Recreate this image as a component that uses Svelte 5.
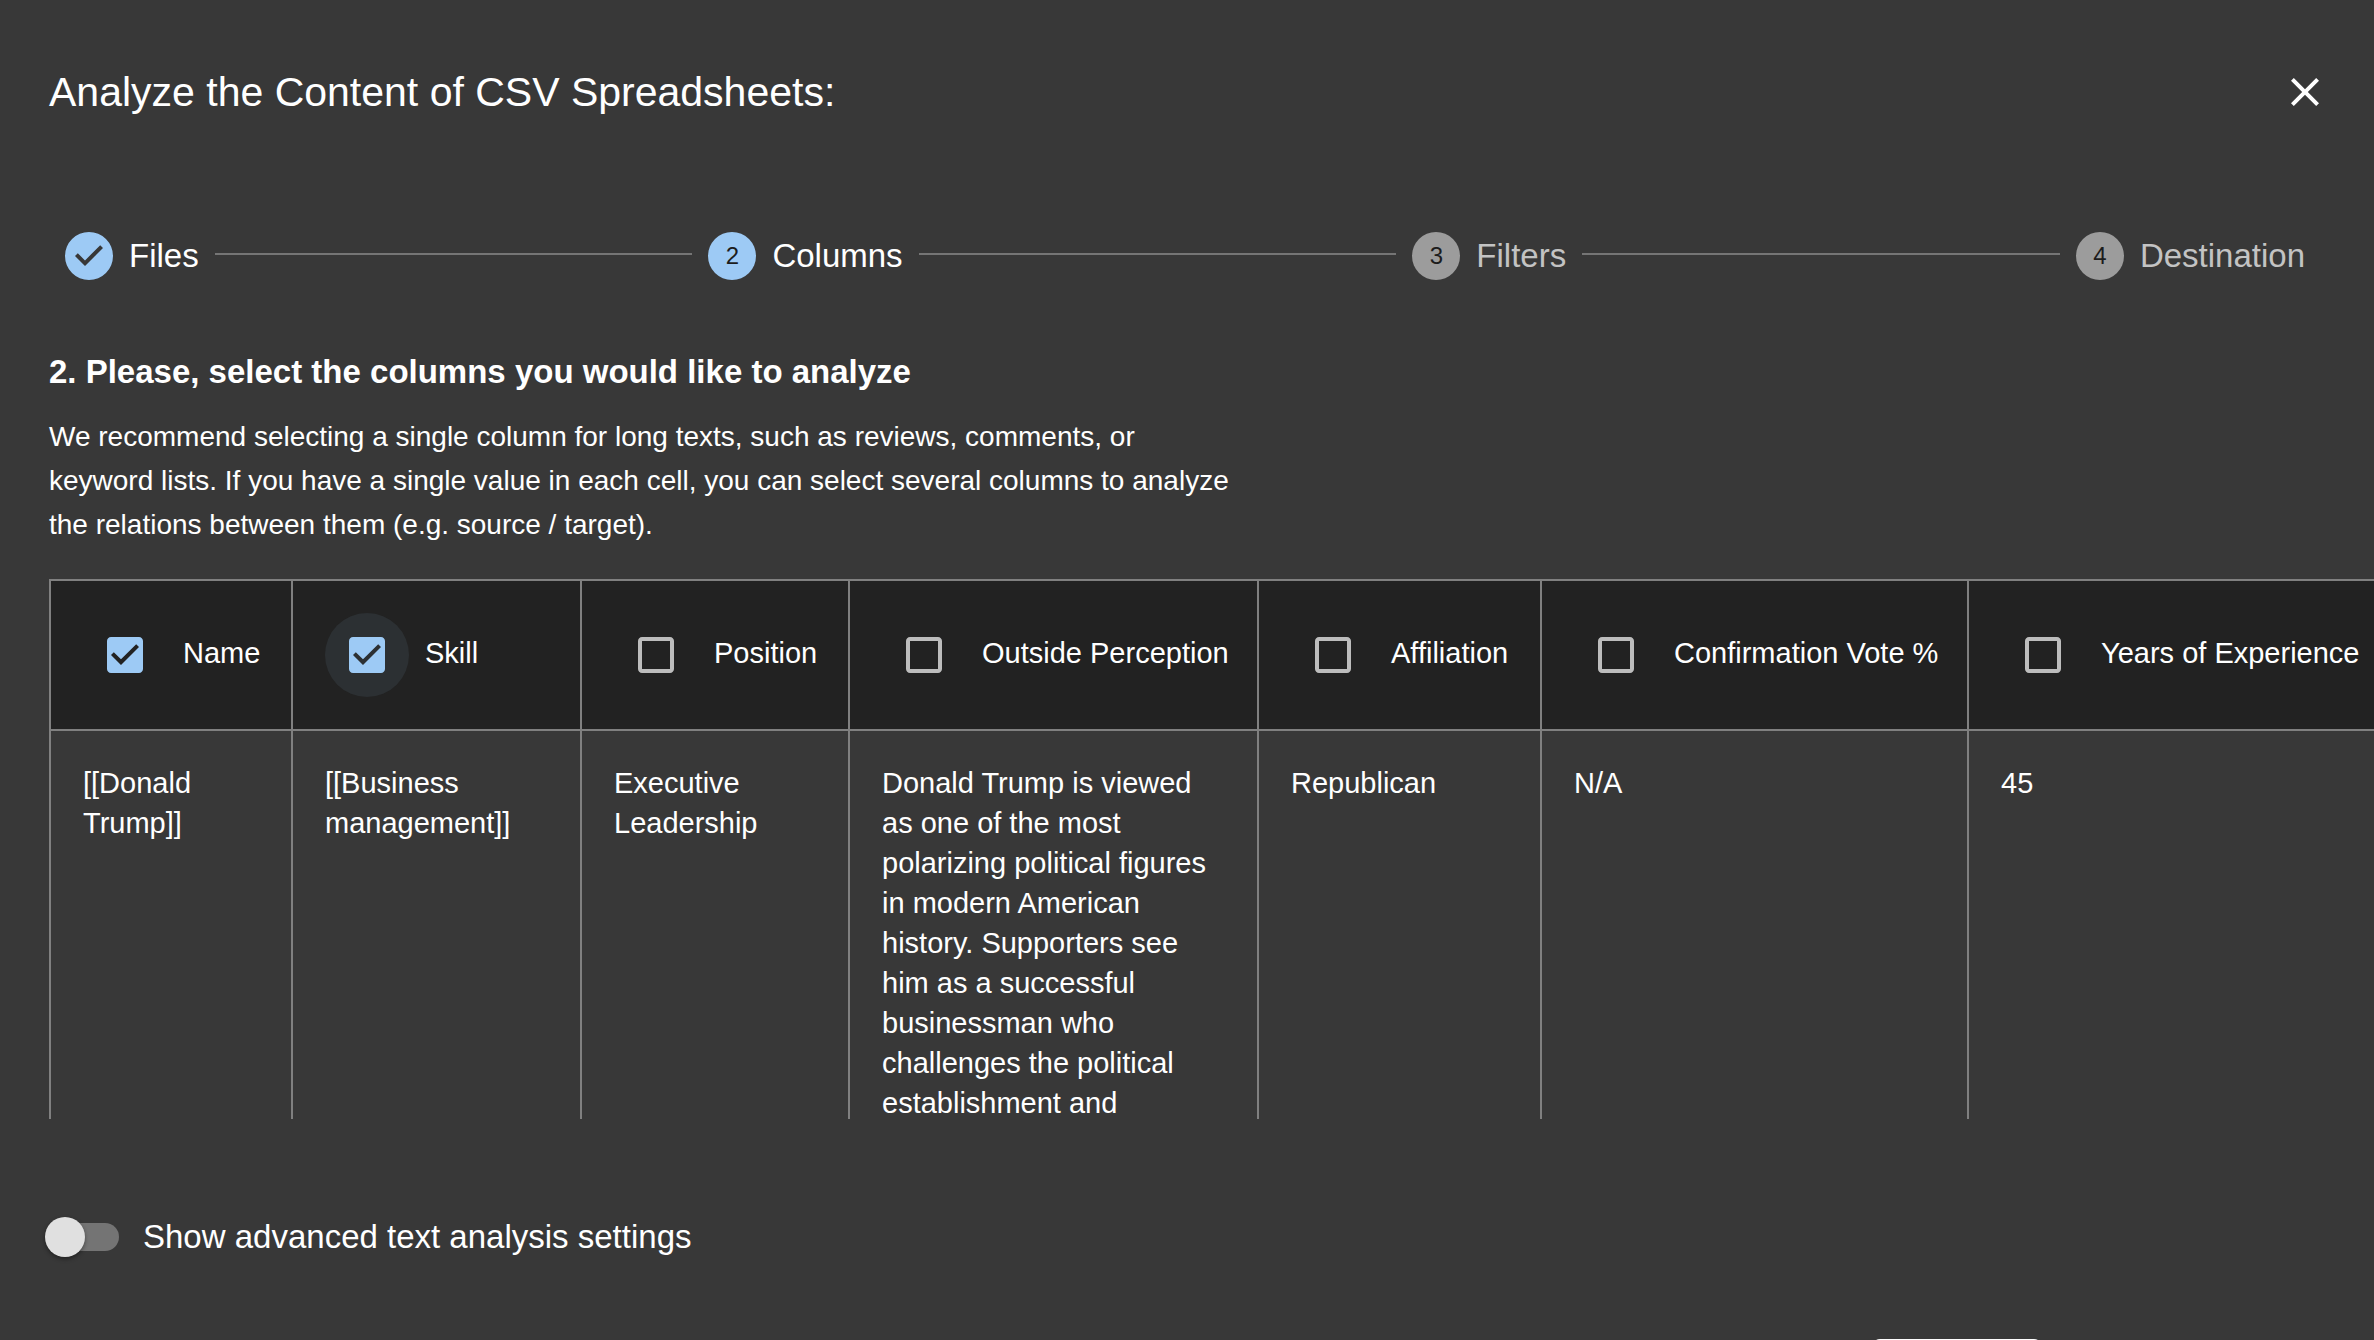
<script>
  let currentStep = 2;
  let showAdvanced = false;

  const steps = ['Files', 'Columns', 'Filters', 'Destination'];

  let columns = [
    { id: 'name', title: 'Name', width: 242, selected: true },
    { id: 'skill', title: 'Skill', width: 289, selected: true, focused: true },
    { id: 'position', title: 'Position', width: 268, selected: false },
    { id: 'perception', title: 'Outside Perception', width: 409, selected: false },
    { id: 'affiliation', title: 'Affiliation', width: 283, selected: false },
    { id: 'vote', title: 'Confirmation Vote %', width: 427, selected: false },
    { id: 'experience', title: 'Years of Experience', width: 420, selected: false }
  ];

  const rows = [
    {
      name: '[[Donald Trump]]',
      skill: '[[Business management]]',
      position: 'Executive Leadership',
      perception:
        'Donald Trump is viewed as one of the most polarizing political figures in modern American history. Supporters see him as a successful businessman who challenges the political establishment and',
      affiliation: 'Republican',
      vote: 'N/A',
      experience: '45'
    }
  ];

  $: tableWidth = columns.reduce((sum, column) => sum + column.width, 2);
</script>

<main class="dialog">
  <header class="dialog-header">
    <h1>Analyze the Content of CSV Spreadsheets:</h1>
    <button class="close" aria-label="Close">
      <svg viewBox="0 0 24 24" aria-hidden="true">
        <path d="M19 6.41L17.59 5 12 10.59 6.41 5 5 6.41 10.59 12 5 17.59 6.41 19 12 13.41 17.59 19 19 17.59 13.41 12z" />
      </svg>
    </button>
  </header>

  <div class="stepper">
    {#each steps as step, index}
      {#if index > 0}
        <span class="connector"></span>
      {/if}
      <div class="step" class:pending={index + 1 > currentStep}>
        {#if index + 1 < currentStep}
          <svg class="done" viewBox="0 0 24 24" aria-hidden="true">
            <path d="M12 0a12 12 0 1 0 0 24a12 12 0 0 0 0-24zm-2 17l-5-5 1.4-1.4 3.6 3.6 7.6-7.6L19 8l-9 9z" />
          </svg>
        {:else}
          <span class="number">{index + 1}</span>
        {/if}
        <span>{step}</span>
      </div>
    {/each}
  </div>

  <section class="intro">
    <h2>2. Please, select the columns you would like to analyze</h2>
    <p>
      We recommend selecting a single column for long texts, such as reviews, comments, or
      keyword lists. If you have a single value in each cell, you can select several columns to
      analyze the relations between them (e.g. source / target).
    </p>
  </section>

  <div class="table-wrap">
    <table style="width: {tableWidth}px">
      <colgroup>
        {#each columns as column}
          <col style="width: {column.width}px" />
        {/each}
      </colgroup>
      <thead>
        <tr>
          {#each columns as column}
            <th scope="col">
              <label class="column-label">
                <span class="checkbox" class:focused={column.focused}>
                  <input type="checkbox" bind:checked={column.selected} />
                  <svg viewBox="0 0 24 24" aria-hidden="true">
                    {#if column.selected}
                      <path class="checked" d="M19 3H5c-1.11 0-2 .9-2 2v14c0 1.1.89 2 2 2h14c1.11 0 2-.9 2-2V5c0-1.1-.89-2-2-2zm-9 14l-5-5 1.41-1.41L10 14.17l7.59-7.59L19 8l-9 9z" />
                    {:else}
                      <path d="M19 5v14H5V5h14m0-2H5c-1.1 0-2 .9-2 2v14c0 1.1.9 2 2 2h14c1.1 0 2-.9 2-2V5c0-1.1-.9-2-2-2z" />
                    {/if}
                  </svg>
                </span>
                <span class="column-title">{column.title}</span>
              </label>
            </th>
          {/each}
        </tr>
      </thead>
      <tbody>
        {#each rows as row}
          <tr>
            {#each columns as column}
              <td>{row[column.id]}</td>
            {/each}
          </tr>
        {/each}
      </tbody>
    </table>
  </div>

  <label class="switch-row">
    <span class="switch">
      <input type="checkbox" bind:checked={showAdvanced} />
      <span class="track"></span>
      <span class="thumb"></span>
    </span>
    Show advanced text analysis settings
  </label>

  <footer class="actions">
    <button class="next" aria-label="Next"></button>
  </footer>
</main>

<style>
  :global(body) {
    background: #383838;
    overflow: hidden;
  }
  .dialog {
    height: 100vh;
    overflow: hidden;
    color: #fff;
    font-family: 'Liberation Sans', Arial, Helvetica, sans-serif;
    font-size: 28px;
    line-height: 40px;
  }
  .dialog-header {
    display: flex;
    align-items: center;
    justify-content: space-between;
    padding: 68px 45px 0 49px;
  }
  h1,
  h2,
  p {
    margin: 0;
  }
  h1 {
    font-size: 41px;
    line-height: 48px;
    font-weight: 400;
  }
  button {
    border: 0;
    padding: 0;
    cursor: pointer;
  }
  svg {
    display: block;
    width: 48px;
    height: 48px;
    fill: currentColor;
  }
  .close {
    background: none;
    color: #fff;
  }
  .stepper {
    display: flex;
    align-items: center;
    gap: 16px;
    padding: 116px 69px 0 65px;
    font-size: 33px;
    line-height: 48px;
  }
  .step {
    display: flex;
    align-items: center;
    gap: 16px;
  }
  .connector {
    flex: 1;
    height: 4px;
    border-top: 2px solid #757575;
  }
  .number {
    width: 48px;
    height: 48px;
    border-radius: 50%;
    background: #9dcaf5;
    color: #1c1c1c;
    font-size: 24px;
    text-align: center;
  }
  .done {
    color: #9dcaf5;
  }
  .pending {
    color: #c3c3c3;
  }
  .pending .number {
    background: #9c9c9c;
  }
  .intro {
    padding: 68px 49px 0;
  }
  h2 {
    font-size: 33px;
    line-height: 48px;
    font-weight: 700;
  }
  p {
    max-width: 1190px;
    padding-top: 19px;
    line-height: 44px;
  }
  .table-wrap {
    height: 540px;
    margin: 32px 0 0 49px;
    overflow: hidden;
  }
  table {
    table-layout: fixed;
    border-collapse: collapse;
    font-size: 29px;
  }
  th,
  td {
    border: 2px solid #808080;
    text-align: left;
    vertical-align: top;
    font-weight: 400;
  }
  th {
    padding: 32px 0 32px 32px;
    background: #222;
  }
  td {
    padding: 32px;
  }
  .column-label {
    display: flex;
    align-items: center;
    gap: 16px;
    white-space: nowrap;
    cursor: pointer;
  }
  .checkbox {
    position: relative;
    padding: 18px;
    border-radius: 50%;
    color: #bdbdbd;
  }
  .focused {
    background: #2c3033;
  }
  .checked {
    fill: #9dcaf5;
  }
  input {
    position: absolute;
    inset: 0;
    width: 100%;
    height: 100%;
    margin: 0;
    opacity: 0;
    cursor: pointer;
  }
  .column-title {
    padding-bottom: 4px;
  }
  .switch-row {
    display: flex;
    align-items: center;
    gap: 24px;
    padding: 98px 45px 0;
    font-size: 33px;
  }
  .switch {
    position: relative;
    display: flex;
    align-items: center;
    width: 74px;
    height: 40px;
  }
  .track {
    width: 68px;
    height: 28px;
    margin-left: 6px;
    border-radius: 14px;
    background: #747474;
  }
  .thumb {
    position: absolute;
    left: 0;
    top: 0;
    width: 40px;
    height: 40px;
    border-radius: 50%;
    background: #e0e0e0;
    box-shadow: 0 2px 4px rgba(0, 0, 0, 0.4);
    pointer-events: none;
  }
  input:checked ~ .thumb {
    left: 40px;
  }
  .actions {
    display: flex;
    justify-content: flex-end;
    padding: 82px 332px 0;
  }
  .next {
    width: 170px;
    height: 72px;
    border-radius: 8px;
    background: #fff;
  }
</style>
